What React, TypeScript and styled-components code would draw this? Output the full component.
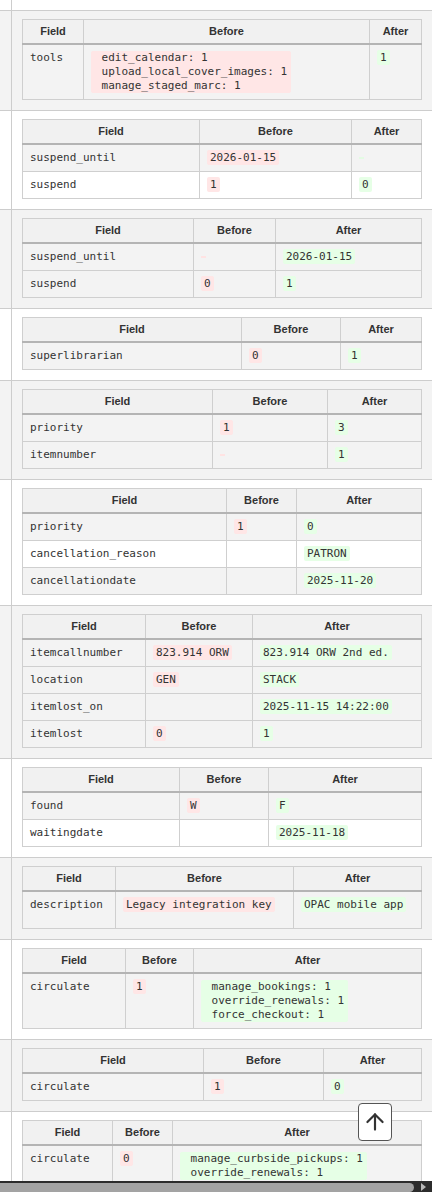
import React from "react";
import styled, { createGlobalStyle, css } from "styled-components";
import { ArrowUp } from "lucide-react";

const GlobalStyle = createGlobalStyle`
  html, body { margin: 0; padding: 0; background: #fff; overflow: hidden; }
  body { font-family: "Liberation Sans", Arial, sans-serif; color: #333; }
  * { box-sizing: border-box; }
`;

type Tone = "old" | "new";
type Value = string | null;

interface Change {
  field: string;
  before: Value;
  after: Value;
  tall?: boolean;
}

interface Diff {
  cols: [number, number, number];
  rows: Change[];
}

const diffs: Diff[] = [
  {
    cols: [61, 286, 52],
    rows: [
      {
        field: "tools",
        before: " edit_calendar: 1\n upload_local_cover_images: 1\n manage_staged_marc: 1",
        after: "1",
      },
    ],
  },
  {
    cols: [177, 152, 70],
    rows: [
      { field: "suspend_until", before: "2026-01-15", after: "" },
      { field: "suspend", before: "1", after: "0" },
    ],
  },
  {
    cols: [171, 82, 146],
    rows: [
      { field: "suspend_until", before: "", after: "2026-01-15" },
      { field: "suspend", before: "0", after: "1" },
    ],
  },
  {
    cols: [219, 99, 81],
    rows: [{ field: "superlibrarian", before: "0", after: "1" }],
  },
  {
    cols: [190, 115, 94],
    rows: [
      { field: "priority", before: "1", after: "3" },
      { field: "itemnumber", before: "", after: "1" },
    ],
  },
  {
    cols: [204, 70, 125],
    rows: [
      { field: "priority", before: "1", after: "0" },
      { field: "cancellation_reason", before: null, after: "PATRON" },
      { field: "cancellationdate", before: null, after: "2025-11-20" },
    ],
  },
  {
    cols: [123, 107, 169],
    rows: [
      { field: "itemcallnumber", before: "823.914 ORW", after: "823.914 ORW 2nd ed." },
      { field: "location", before: "GEN", after: "STACK" },
      { field: "itemlost_on", before: null, after: "2025-11-15 14:22:00" },
      { field: "itemlost", before: "0", after: "1" },
    ],
  },
  {
    cols: [157, 89, 153],
    rows: [
      { field: "found", before: "W", after: "F" },
      { field: "waitingdate", before: null, after: "2025-11-18" },
    ],
  },
  {
    cols: [93, 178, 128],
    rows: [
      {
        field: "description",
        before: "Legacy integration key",
        after: "OPAC mobile app",
        tall: true,
      },
    ],
  },
  {
    cols: [103, 68, 228],
    rows: [
      {
        field: "circulate",
        before: "1",
        after: " manage_bookings: 1\n override_renewals: 1\n force_checkout: 1",
      },
    ],
  },
  {
    cols: [181, 120, 98],
    rows: [{ field: "circulate", before: "1", after: "0" }],
  },
  {
    cols: [90, 60, 249],
    rows: [
      {
        field: "circulate",
        before: "0",
        after: " manage_curbside_pickups: 1\n override_renewals: 1",
      },
    ],
  },
];

const Page = styled.div`
  width: 432px;
`;

const Section = styled.div<{ $alt: boolean }>`
  display: grid;
  grid-template-columns: 12px 1fr;
  background: ${(p) => (p.$alt ? "#f3f3f3" : "#ffffff")};
  border-top: 1px solid #cdcdcd;
`;

const Stub = styled(Section)`
  height: 10px;
  border-top: none;
`;

const Gutter = styled.div`
  border-right: 1px solid #cdcdcd;
`;

const Body = styled.div`
  padding: 8px 10px 10px 10px;
`;

const Grid = styled.table`
  width: 100%;
  table-layout: fixed;
  border-collapse: collapse;
  border: 1px solid #c2c2c2;
`;

const Col = styled.col<{ $w: number }>`
  width: ${(p) => p.$w}px;
`;

const Th = styled.th`
  background: #f1f1f1;
  font-family: "Liberation Sans", Arial, sans-serif;
  font-weight: bold;
  font-size: 11px;
  line-height: 13px;
  color: #333;
  padding: 5px 7px;
  border: 1px solid #cfcfcf;
  border-bottom: 2px solid #b4b4b4;
  text-align: center;
`;

const Tr = styled.tr<{ $tall?: boolean }>`
  &:nth-child(odd) {
    background: #f3f3f3;
  }
  ${(p) =>
    p.$tall &&
    css`
      height: 37px;
    `}
`;

const Td = styled.td`
  font-family: "DejaVu Sans Mono", "Liberation Mono", monospace;
  font-size: 11px;
  line-height: 14px;
  color: #333;
  padding: 6px 7px;
  border: 1px solid #cfcfcf;
  vertical-align: top;
  text-align: left;
  white-space: nowrap;
`;

const Val = styled.span<{ $tone: Tone; $multi: boolean }>`
  background: ${(p) => (p.$tone === "old" ? "#ffe6e6" : "#e6ffe6")};
  padding: 1px 3px;
  border-radius: 2px;
  ${(p) =>
    p.$multi &&
    css`
      display: inline-block;
      white-space: pre;
      line-height: 14px;
      padding: 0 4px;
      vertical-align: top;
    `}
`;

const Blank = styled.span<{ $tone: Tone }>`
  display: inline-block;
  width: 5px;
  height: 2px;
  vertical-align: middle;
  background: ${(p) => (p.$tone === "old" ? "#ffe3e3" : "#e3fbe3")};
`;

const HScroll = styled.div`
  position: fixed;
  left: 0;
  right: 0;
  bottom: 0;
  height: 11px;
  background: #2c2c2c;
  display: flex;
  align-items: flex-end;
`;

const Thumb = styled.div`
  flex: 0 0 414px;
  height: 9px;
  background: #a3a3a3;
  border-radius: 0 5px 5px 0;
`;

const ArrowBtn = styled.div`
  flex: 1;
  height: 11px;
  display: flex;
  align-items: center;
  justify-content: center;
  &::after {
    content: "";
    border-left: 5px solid #b8b8b8;
    border-top: 4px solid transparent;
    border-bottom: 4px solid transparent;
  }
`;

const TopButton = styled.button`
  position: fixed;
  right: 40px;
  bottom: 51px;
  width: 34px;
  height: 38px;
  padding: 0;
  background: #fff;
  border: 1px solid #555;
  border-radius: 4px;
  display: flex;
  align-items: center;
  justify-content: center;
  color: #333;
  cursor: pointer;
`;

function Cell({ value, tone }: { value: Value; tone: Tone }) {
  if (value === null) return <Td />;
  if (value === "")
    return (
      <Td>
        <Blank $tone={tone} />
      </Td>
    );
  return (
    <Td>
      <Val $tone={tone} $multi={value.includes("\n")}>
        {value}
      </Val>
    </Td>
  );
}

function DiffTable({ diff }: { diff: Diff }) {
  return (
    <Grid>
      <colgroup>
        {diff.cols.map((w, i) => (
          <Col key={i} $w={w} />
        ))}
      </colgroup>
      <thead>
        <tr>
          <Th>Field</Th>
          <Th>Before</Th>
          <Th>After</Th>
        </tr>
      </thead>
      <tbody>
        {diff.rows.map((r) => (
          <Tr key={r.field} $tall={r.tall}>
            <Td>{r.field}</Td>
            <Cell value={r.before} tone="old" />
            <Cell value={r.after} tone="new" />
          </Tr>
        ))}
      </tbody>
    </Grid>
  );
}

export default function App() {
  return (
    <>
      <GlobalStyle />
      <Page>
        <Stub $alt={false}>
          <Gutter />
          <div />
        </Stub>
        {diffs.map((d, i) => (
          <Section key={i} $alt={i % 2 === 0}>
            <Gutter />
            <Body>
              <DiffTable diff={d} />
            </Body>
          </Section>
        ))}
      </Page>
      <TopButton aria-label="Back to top">
        <ArrowUp size={26} strokeWidth={2} />
      </TopButton>
      <HScroll>
        <Thumb />
        <ArrowBtn />
      </HScroll>
    </>
  );
}
